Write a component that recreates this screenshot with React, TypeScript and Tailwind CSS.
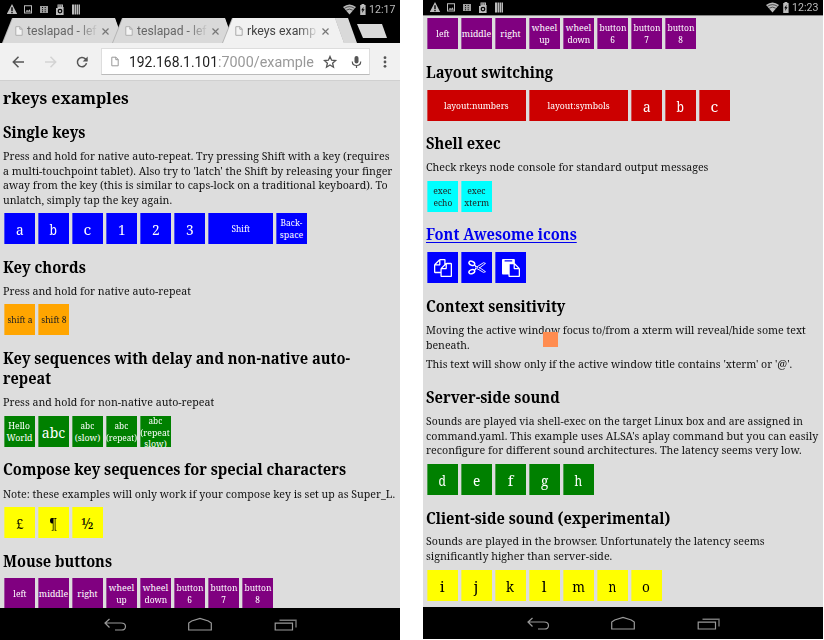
import { useLayoutEffect, useRef, useState, type ReactNode } from 'react';

/* A single line of text condensed or stretched to a given width. */
function Fit({ w, center = false, children }: { w: number; center?: boolean; children: ReactNode }) {
  const ref = useRef<HTMLSpanElement>(null);
  const [scale, setScale] = useState(1);
  useLayoutEffect(() => {
    const natural = ref.current?.offsetWidth;
    if (natural) setScale(w / natural);
  }, [w]);
  return (
    <span className={`flex whitespace-nowrap ${center ? 'justify-center' : 'justify-start'}`}>
      <span
        ref={ref}
        className={`block shrink-0 ${center ? 'origin-center' : 'origin-left'}`}
        style={{ transform: `scaleX(${scale})` }}
      >
        {children}
      </span>
    </span>
  );
}

type Line = [string, number];

function Heading({ lines, className }: { lines: Line[]; className: string }) {
  return (
    <h2 className={`shrink-0 pl-[3px] text-[16px] leading-[20px] font-bold ${className}`}>
      {lines.map(([t, w]) => (
        <Fit key={t} w={w}>{t}</Fit>
      ))}
    </h2>
  );
}

function Para({ lines, className }: { lines: Line[]; className: string }) {
  return (
    <p className={`shrink-0 pt-px pl-[3px] text-[11.4px] leading-[14.67px] text-[#111] ${className}`}>
      {lines.map(([t, w]) => (
        <Fit key={t} w={w}>{t}</Fit>
      ))}
    </p>
  );
}

/* Approximate widths of the small caption words, in pixels. */
const wordWidth: Record<string, number> = {
  Shift: 19, 'Back-': 22, space: 23, 'shift a': 25, 'shift 8': 25.5, Hello: 21.5, World: 26,
  '(slow)': 25, '(repeat)': 31, '(repeat': 29.5, 'slow)': 22, left: 13.5, middle: 29, right: 20,
  wheel: 25, up: 10.5, down: 23, button: 27, exec: 18.5, echo: 19, xterm: 24.5,
  'layout:numbers': 65, 'layout:symbols': 62, abc: 14,
};

const letterWidth: Record<string, number> = { abc: 23, m: 12.5, i: 4.4, j: 4.4, l: 4.4, f: 5.4, '¶': 8, '½': 12 };

function Key({ label, color, wide = '', big = false }: { label: ReactNode; color: string; wide?: string; big?: boolean }) {
  const text = typeof label === 'string';
  const large = big || (text && (label as string).length === 1);
  const tall = text && (label as string).split('\n').length === 3;
  return (
    <div
      className={`flex h-[31px] shrink-0 flex-col items-center shadow-[inset_1px_0_0_rgba(221,221,221,0.35)] ${
        tall ? 'justify-start' : text ? 'justify-center pt-[2px]' : 'justify-center'
      } ${wide || 'w-[31px]'} ${color} ${large ? 'text-[14px] leading-[18px]' : 'text-[8.8px] leading-[11.7px]'}`}
    >
      {text
        ? (label as string).split('\n').map((l) => (
            <Fit key={l} w={large ? letterWidth[l] ?? 7.8 : wordWidth[l] ?? 4.7} center>{l}</Fit>
          ))
        : label}
    </div>
  );
}

function Keys({ labels, color, className }: { labels: string[]; color: string; className: string }) {
  return (
    <div className={`flex shrink-0 gap-[3px] pl-1 ${className}`}>
      {labels.map((l) => (
        <Key
          key={l}
          label={l}
          color={color}
          big={l === 'abc'}
          wide={l === 'Shift' ? 'w-[65px]' : l.startsWith('layout') ? 'w-[99px]' : ''}
        />
      ))}
    </div>
  );
}

const mouse = ['left', 'middle', 'right', 'wheel\nup', 'wheel\ndown', 'button\n6', 'button\n7', 'button\n8'];
const blue = 'bg-[#0000ff] text-white';
const green = 'bg-[#008000] text-white';
const yellow = 'bg-[#ffff00] text-black';
const purple = 'bg-[#800080] text-white';

function StatusBar({ time, className }: { time: string; className: string }) {
  return (
    <div className={`flex shrink-0 items-center bg-black text-[#bbb] ${className}`}>
      <svg className="ml-[7px] h-[11px] w-[75px]" viewBox="0 0 75 11" fill="currentColor">
        <path fillRule="evenodd" d="M5 0 10.2 10H-.2ZM4.3 3.3V7H5.7V3.3ZM4.3 7.8V9.2H5.7V7.8Z" />
        <path fillRule="evenodd" d="M17 1.2H25V9.5H17ZM18 2.2V8.5H24V2.2Z" />
        <path d="m18.5 7.7 1.5-2 1.2 1.2 1.3-1.6 1.3 2.4Z" />
        <path fillRule="evenodd" d="M33 2h8v7h-8ZM35 3v1h1V3Zm2.7 0v1h1V3ZM35 5.2v1h1v-1Zm2.7 0v1h1v-1ZM35 7.3v1h1v-1Zm2.7 0v1h1v-1Z" opacity=".85" />
        <path fillRule="evenodd" d="M50.5.5H56V3h.6v8H49V4h1.5ZM51.5 1.5v1h1v-1Zm2.2 0v1h1v-1ZM53 4.7a2.4 2.4 0 1 0 0 4.8 2.4 2.4 0 0 0 0-4.8Z" />
        <circle cx="53" cy="7.1" r="1.2" />
        <path d="M65 .5h2v10h-2ZM67.5.5h1.6v10h-1.6ZM69.6.5h1.6v10h-1.6ZM71.7.5h1.3v10h-1.3Z" />
      </svg>
      <svg className="ml-auto h-[11px] w-[24px]" viewBox="0 0 24 11" fill="currentColor">
        <path d="M0 3Q6.5-2 13 3L6.5 10.5Z" />
        <path d="M1.5 4.3Q6.5 1 11.5 4.3M3.2 6.2Q6.5 4 9.8 6.2" fill="none" stroke="#000" strokeWidth=".6" />
        <path fillRule="evenodd" d="M17.2 1h1.3V0h2.8v1h1.3v10h-5.4Zm3.4 1.7-2.4 3.5h1.4L19 9l2.6-3.8h-1.4Z" />
      </svg>
      <span className="mr-[4px] ml-[1.5px] font-[Roboto,sans-serif] text-[11px] leading-none">
        <Fit w={26}>{time}</Fit>
      </span>
    </div>
  );
}

function NavBar() {
  return (
    <div className="flex h-8 shrink-0 items-center bg-black">
      <svg className="h-8 w-[400px]" viewBox="0 0 400 32" fill="none" stroke="#999" strokeWidth="1.2">
        <path d="m109.5 11-4.5 4 4.5 4.5M105 15H121q4.5 0 4.5 3.6T121 22h-6" />
        <path d="M188.7 22V15l3-2 8.3-2.6 8.3 2.6 3 2v7Z" />
        <path d="M275.2 15.2h17.3v6.8h-17.3Z" />
        <path d="M279.5 12.2h16.5v7.3" strokeWidth="1.4" stroke="#777" />
      </svg>
    </div>
  );
}

const Page = ({ className }: { className: string }) => (
  <svg className={className} viewBox="0 0 8 10" stroke="currentColor" strokeWidth="1">
    <path d="M.8.7H5L7.2 3v6.3H.8ZM4.8.7V3.2H7.2" />
  </svg>
);

const Cross = () => (
  <svg className="h-[7px] w-[7px] shrink-0 text-[#777]" viewBox="0 0 7 7" stroke="currentColor" strokeWidth="1.2">
    <path d="m.5.5 6 6m0-6-6 6" />
  </svg>
);

function Tab({ title, w, active = false, className = '' }: { title: string; w: number; active?: boolean; className?: string }) {
  const fill = active ? 'bg-[#f1f1f1] text-[#444]' : 'bg-[#d9d9d9] text-[#666]';
  return (
    <div className={`h-[25px] w-[122px] shrink-0 bg-[#b5b5b5] [clip-path:polygon(0_100%,10px_0,113px_0,122px_100%)] ${className}`}>
      <div className={`flex h-full items-center pt-px pl-[13px] [clip-path:polygon(1px_100%,11px_0,113px_0,122px_100%)] ${fill}`}>
        <Page className={`h-[10px] w-[8px] shrink-0 fill-[#f4f4f4] ${active ? 'text-[#aaa]' : 'text-[#b0b0b0]'}`} />
        <div className="ml-[4px] w-[70px] font-[Roboto,sans-serif] text-[12.5px] leading-[16px] [mask-image:linear-gradient(to_right,black_74%,rgba(0,0,0,0.15)_98%)]">
          <Fit w={w}>{title}</Fit>
        </div>
        <div className="ml-[5px] flex"><Cross /></div>
      </div>
    </div>
  );
}

function Browser() {
  return (
    <>
      <div className="flex h-[25px] shrink-0 items-start bg-black pl-[2px]">
        <Tab title="teslapad - lef" w={70} />
        <Tab title="teslapad - lef" w={70} className="-ml-[12px]" />
        <Tab title="rkeys examp" w={69} active className="z-10 -ml-[12px]" />
        <div className="-ml-[10px] h-[25px] w-[23px] shrink-0 bg-[#d9d9d9] [clip-path:polygon(0_0,14px_0,23px_100%,9px_100%)]" />
        <div className="mt-[6px] h-[14px] w-[30px] shrink-0 bg-[#d9d9d9] [clip-path:polygon(0_0,25px_0,30px_100%,6px_100%)]" />
      </div>
      <div className="flex h-[38px] shrink-0 items-center border-b border-[#d0d0d0] bg-[#f1f1f1] text-[#555]">
        <svg className="ml-[9px] h-[14px] w-[86px]" viewBox="0 0 86 14" fill="none" stroke="currentColor" strokeWidth="1.5">
          <path d="M15 7H4.5m5-5.2L4.3 7l5.2 5.2" />
          <path d="M36 7h10.5m-5-5.2L46.7 7l-5.2 5.2" stroke="#d3d3d3" />
          <path d="M77.5 8.2a4.6 4.6 0 1 1-1.2-4.3L78 5.6" />
          <path d="M78.7 1.5v5h-5Z" fill="currentColor" stroke="none" />
        </svg>
        <div className="ml-[6px] flex h-[27px] w-[269px] shrink-0 items-center border border-[#ddd] border-b-[#bbb] bg-white pl-[9px]">
          <Page className="h-[11px] w-[8px] shrink-0 fill-white text-[#999]" />
          <div className="ml-[9.5px] flex pt-[2px] font-[Roboto,sans-serif] text-[14.5px] leading-[20px]">
            <div className="w-[89px] text-[#222]"><Fit w={89}>192.168.1.101</Fit></div>
            <div className="w-[96px] text-[#999]"><Fit w={96}>:7000/example</Fit></div>
          </div>
          <svg className="ml-[9.5px] h-[14px] w-[40px]" viewBox="0 0 40 14" fill="none" stroke="currentColor" strokeWidth="1.3">
            <path d="m7 1.5 1.6 3.7 4 .3-3 2.7.9 4L7 10l-3.5 2.2.9-4-3-2.7 4-.3Z" />
            <rect x="31.5" y="1" width="4" height="7.5" rx="2" fill="currentColor" stroke="none" />
            <path d="M29.3 6.5q0 4 4.2 4t4.2-4M33.5 10.5V13" strokeWidth="1.2" />
          </svg>
        </div>
        <svg className="ml-[13px] h-[12px] w-[4px]" viewBox="0 0 4 12" fill="currentColor">
          <circle cx="2" cy="1.7" r="1.4" /><circle cx="2" cy="6" r="1.4" /><circle cx="2" cy="10.3" r="1.4" />
        </svg>
      </div>
    </>
  );
}

const IconCopy = () => (
  <svg className="h-[18px] w-[18px]" viewBox="0 0 1792 1792" fill="currentColor">
    <path d="M1696 384q40 0 68 28t28 68v1216q0 40-28 68t-68 28h-960q-40 0-68-28t-28-68v-288h-544q-40 0-68-28t-28-68v-672q0-40 20-88t48-76l408-408q28-28 76-48t88-20h416q40 0 68 28t28 68v328q68-40 128-40h416zm-544 213l-299 299h299v-299zm-640-384l-299 299h299v-299zm196 647l316-316v-416h-384v416q0 40-28 68t-68 28h-416v640h512v-256q0-40 20-88t48-76zm956 804v-1152h-384v416q0 40-28 68t-68 28h-416v640h896z" />
  </svg>
);
const IconPaste = () => (
  <svg className="h-[18px] w-[18px]" viewBox="0 0 1792 1792" fill="currentColor">
    <path d="M768 1664h896v-640h-416q-40 0-68-28t-28-68v-416h-384v1152zm256-1440v-64q0-13-9.5-22.5t-22.5-9.5h-704q-13 0-22.5 9.5t-9.5 22.5v64q0 13 9.5 22.5t22.5 9.5h704q13 0 22.5-9.5t9.5-22.5zm256 672h299l-299-299v299zm512 128v672q0 40-28 68t-68 28h-960q-40 0-68-28t-28-68v-160h-544q-40 0-68-28t-28-68v-1344q0-40 28-68t68-28h1088q40 0 68 28t28 68v328q21 13 36 28l408 408q28 28 48 76t20 88z" />
  </svg>
);
const IconCut = () => (
  <svg className="h-[17px] w-[18px]" viewBox="0 0 18 17" fill="none" stroke="currentColor">
    <ellipse cx="3.8" cy="4.3" rx="3" ry="2" transform="rotate(22 3.8 4.3)" strokeWidth="1.5" />
    <ellipse cx="3.8" cy="12.7" rx="3" ry="2" transform="rotate(-22 3.8 12.7)" strokeWidth="1.5" />
    <path d="M6.3 6 9 7.8 15.5 3.7l2 .7-6.5 4.9M6.3 11l2.5-1.5 6.7 3.9 2-.7L11 8.2M6.7 5.8 8 8.5 6.7 11.2" strokeWidth=".9" />
    <circle cx="9.7" cy="8.5" r=".6" fill="currentColor" stroke="none" />
  </svg>
);

export default function App() {
  return (
    <div className="flex h-[640px] w-[824px] overflow-hidden bg-white font-['Noto_Serif','Droid_Serif','DejaVu_Serif_Condensed','DejaVu_Serif',serif] text-black">
      <div className="flex h-[640px] w-[400px] flex-col">
        <StatusBar time="12:17" className="h-[18px]" />
        <Browser />
        <main className="flex h-[527px] shrink-0 flex-col overflow-hidden bg-[#dddddd]">
          <Heading className="mt-[7px]" lines={[['rkeys examples', 125.5]]} />
          <Heading className="mt-[14px]" lines={[['Single keys', 82]]} />
          <Para
            className="mt-[6px] h-[60px]"
            lines={[
              ['Press and hold for native auto-repeat. Try pressing Shift with a key (requires', 386.5],
              ["a multi-touchpoint tablet). Also try to 'latch' the Shift by releasing your finger", 389],
              ['away from the key (this is similar to caps-lock on a traditional keyboard). To', 385],
              ['unlatch, simply tap the key again.', 169],
            ]}
          />
          <Keys className="mt-[5px]" color={blue} labels={['a', 'b', 'c', '1', '2', '3', 'Shift', 'Back-\nspace']} />
          <Heading className="mt-[13px] mb-px" lines={[['Key chords', 82.5]]} />
          <Para className="mt-[5px] h-[16px]" lines={[['Press and hold for native auto-repeat', 187.5]]} />
          <Keys className="mt-[5px]" color="bg-[#ffa500] text-[#222]" labels={['shift a', 'shift 8']} />
          <Heading className="mt-[13px] mb-px" lines={[['Key sequences with delay and non-native auto-', 347.5], ['repeat', 48]]} />
          <Para className="mt-[5px] h-[16px]" lines={[['Press and hold for non-native auto-repeat', 211]]} />
          <Keys className="mt-[6px]" color={green} labels={['Hello\nWorld', 'abc', 'abc\n(slow)', 'abc\n(repeat)', 'abc\n(repeat\nslow)']} />
          <Heading className="mt-[12px] mb-px" lines={[['Compose key sequences for special characters', 343]]} />
          <Para className="mt-[6px] h-[16px]" lines={[['Note: these examples will only work if your compose key is set up as Super_L.', 392]]} />
          <Keys className="mt-[5px]" color={yellow} labels={['£', '¶', '½']} />
          <Heading className="mt-[13px]" lines={[['Mouse buttons', 109]]} />
          <Keys className="mt-[7px]" color={purple} labels={mouse} />
        </main>
        <NavBar />
      </div>

      <div className="ml-[23px] flex h-[639px] w-[400px] flex-col">
        <StatusBar time="12:23" className="h-[15px]" />
        <main className="relative flex h-[592px] shrink-0 flex-col overflow-hidden border-t border-[#888] bg-[#dddddd]">
          <Keys className="mt-[2px]" color={purple} labels={mouse} />
          <Heading className="mt-[13px] mb-px" lines={[['Layout switching', 127]]} />
          <Keys className="mt-[7px]" color="bg-[#cc0000] text-white" labels={['layout:numbers', 'layout:symbols', 'a', 'b', 'c']} />
          <Heading className="mt-[12px] mb-px" lines={[['Shell exec', 75]]} />
          <Para className="mt-[5px] h-[16px]" lines={[['Check rkeys node console for standard output messages', 282]]} />
          <Keys className="mt-[6px]" color="bg-[#00ffff] text-[#222]" labels={['exec\necho', 'exec\nxterm']} />
          <Heading className="mt-[12px] mb-px text-[#0000ee] underline underline-offset-2" lines={[['Font Awesome icons', 151]]} />
          <div className="mt-[7px] flex shrink-0 gap-[3px] pl-1">
            <Key color={blue} label={<IconCopy />} />
            <Key color={blue} label={<IconCut />} />
            <Key color={blue} label={<IconPaste />} />
          </div>
          <Heading className="mt-[13px] mb-px" lines={[['Context sensitivity', 139.5]]} />
          <Para className="mt-[5px] h-[30px]" lines={[['Moving the active window focus to/from a xterm will reveal/hide some text', 379.5], ['beneath.', 43.5]]} />
          <Para className="mt-[4px] h-[16px]" lines={[["This text will show only if the active window title contains 'xterm' or '@'.", 366]]} />
          <Heading className="mt-[15px] mb-px" lines={[['Server-side sound', 133.5]]} />
          <Para
            className="mt-[5px] h-[45px]"
            lines={[
              ['Sounds are played via shell-exec on the target Linux box and are assigned in', 377],
              ["command.yaml. This example uses ALSA's aplay command but you can easily", 392],
              ['reconfigure for different sound architectures. The latency seems very low.', 375.5],
            ]}
          />
          <Keys className="mt-[6px]" color={green} labels={['d', 'e', 'f', 'g', 'h']} />
          <Heading className="mt-[13px] mb-px" lines={[['Client-side sound (experimental)', 244.5]]} />
          <Para className="mt-[4px] h-[31px]" lines={[['Sounds are played in the browser. Unfortunately the latency seems', 338.5], ['significantly higher than server-side.', 186]]} />
          <Keys className="mt-[6px]" color={yellow} labels={['i', 'j', 'k', 'l', 'm', 'n', 'o']} />
          <div className="absolute top-[316px] left-[120px] h-[15px] w-[15px] bg-[#ff8c50]" />
        </main>
        <NavBar />
      </div>
    </div>
  );
}
